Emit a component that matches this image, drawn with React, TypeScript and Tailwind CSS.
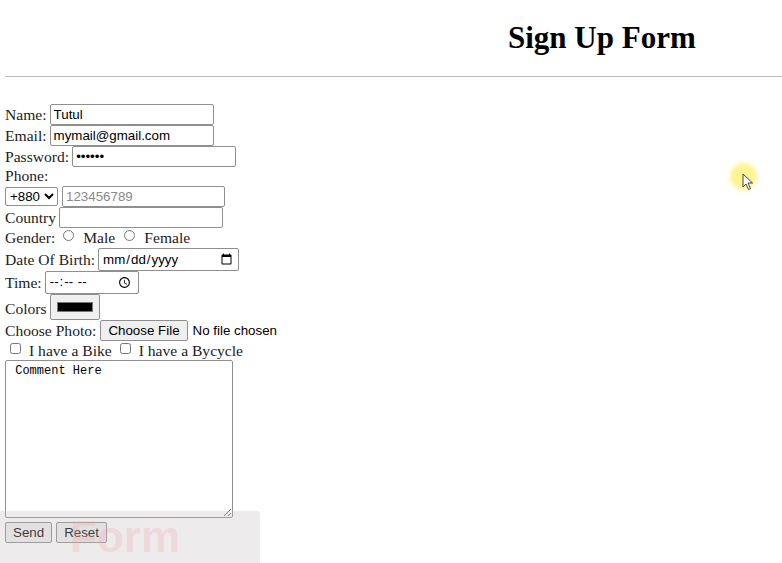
import React from 'react'

const ctl = "font-['Liberation_Sans',Arial,sans-serif] text-[13.33px] text-black"

export default function App() {
  return (
    <div className="relative w-[782px] h-[563px] overflow-hidden bg-white font-['Liberation_Serif','Times_New_Roman',serif] text-[15.6px] leading-[18px] text-[#222]">
      {/* header */}
      <div className="h-[76px] pl-[508px] pt-[19px]">
        <h1 className="text-[31px] font-bold leading-[37px] text-black">Sign Up Form</h1>
      </div>
      <hr className="ml-[5px] border-t border-[#b9b9b9]" />

      <form className="pl-[5px] pt-[27px]">
        <div className="flex items-center h-[21px]">
          <label>Name:</label>
          <input type="text" defaultValue="Tutul" className={`${ctl} ml-[3px] w-[164px] h-[21px] px-[3px] border border-[#8f8f8f] rounded-[2px]`} />
        </div>
        <div className="flex items-center h-[21px]">
          <label>Email:</label>
          <input type="email" defaultValue="mymail@gmail.com" className={`${ctl} ml-[3px] w-[164px] h-[21px] px-[3px] border border-[#8f8f8f] rounded-[2px]`} />
        </div>
        <div className="flex items-center h-[21px]">
          <label>Password:</label>
          <input type="password" defaultValue="123456" className={`${ctl} ml-[3px] w-[164px] h-[21px] px-[3px] border border-[#8f8f8f] rounded-[2px]`} />
        </div>
        <div className="h-[18px]">Phone:</div>
        <div className="flex items-center h-[22px]">
          <select className={`${ctl} w-[53px] h-[19px] border border-[#8f8f8f] rounded-[2px] bg-white`}>
            <option>+880</option>
          </select>
          <input type="tel" placeholder="123456789" className={`${ctl} ml-[4px] w-[163px] h-[21px] px-[3px] border border-[#8f8f8f] rounded-[2px] placeholder:text-[#8a8a8a]`} />
        </div>
        <div className="flex items-center h-[21px]">
          <label>Country</label>
          <input type="text" className={`${ctl} ml-[3px] w-[164px] h-[21px] px-[3px] border border-[#8f8f8f] rounded-[2px]`} />
        </div>
        <div className="flex items-center h-[20px]">
          <span>Gender:</span>
          <input type="radio" name="g" className="ml-[8px] mr-[9px] w-[11px] h-[11px] -mt-[6px]" />
          <span>Male</span>
          <input type="radio" name="g" className="ml-[9px] mr-[9px] w-[11px] h-[11px] -mt-[6px]" />
          <span>Female</span>
        </div>
        <div className="flex items-center h-[23px]">
          <label>Date Of Birth:</label>
          <input type="date" className={`${ctl} ml-[3px] w-[141px] h-[23px] px-[3px] border border-[#8f8f8f] rounded-[2px]`} />
        </div>
        <div className="flex items-center h-[23px]">
          <label>Time:</label>
          <input type="time" className={`${ctl} ml-[3px] w-[94px] h-[23px] px-[3px] border border-[#8f8f8f] rounded-[2px]`} />
        </div>
        <div className="flex items-end h-[26px]">
          <label className="mb-[2px]">Colors</label>
          <input type="color" defaultValue="#000000" className="ml-[3px] w-[50px] h-[26px] border border-[#8f8f8f] rounded-[2px] bg-[#efefef] px-[4px] py-[3px]" />
        </div>
        <div className="flex items-center h-[21px]">
          <label>Choose Photo:</label>
          <input type="file" className={`${ctl} ml-[4px] file:mr-[5px] file:h-[21px] file:px-[7px] file:border file:border-[#8f8f8f] file:rounded-[2px] file:bg-[#efefef] file:font-['Liberation_Sans',Arial,sans-serif] file:text-[13.33px]`} />
        </div>
        <div className="flex items-center h-[19px]">
          <input type="checkbox" className="ml-[5px] mr-[8px] w-[11px] h-[11px] -mt-[4px]" />
          <span>I have a Bike</span>
          <input type="checkbox" className="ml-[8px] mr-[8px] w-[11px] h-[11px] -mt-[4px]" />
          <span>I have a Bycycle</span>
        </div>
        <textarea
          defaultValue=" Comment Here"
          className="block w-[228px] h-[158px] px-[2px] py-[3px] border border-[#8f8f8f] rounded-[2px] font-['Liberation_Mono','Courier_New',monospace] text-[12px] leading-[14px] text-black resize"
        />
        <div className="flex gap-[4px] mt-[4px]">
          <button type="button" className={`${ctl} h-[21px] px-[7px] border border-[#8f8f8f] rounded-[2px] bg-[#efefef]`}>Send</button>
          <button type="reset" className={`${ctl} h-[21px] px-[7px] border border-[#8f8f8f] rounded-[2px] bg-[#efefef]`}>Reset</button>
        </div>
      </form>

      {/* video overlay caption box */}
      <div className="absolute left-0 top-[511px] w-[260px] h-[52px] bg-[#c8bcc2]/30 rounded-tr-[3px] flex items-center pl-[70px]">
        <span className="font-['Liberation_Sans',Arial,sans-serif] font-bold text-[44px] text-[#f0a0a0]/25">Form</span>
      </div>

      {/* cursor highlight */}
      <div className="absolute left-[730px] top-[163px] w-[27px] h-[27px] rounded-full bg-[#fff176]/80 blur-[2px]" />
      <svg className="absolute left-[742px] top-[173px]" width="12" height="18" viewBox="0 0 12 18">
        <path d="M1 1 L1 14 L4 11 L6.5 16.5 L8.5 15.5 L6 10 L10.5 10 Z" fill="white" stroke="#444" strokeWidth="1" />
      </svg>
    </div>
  )
}
